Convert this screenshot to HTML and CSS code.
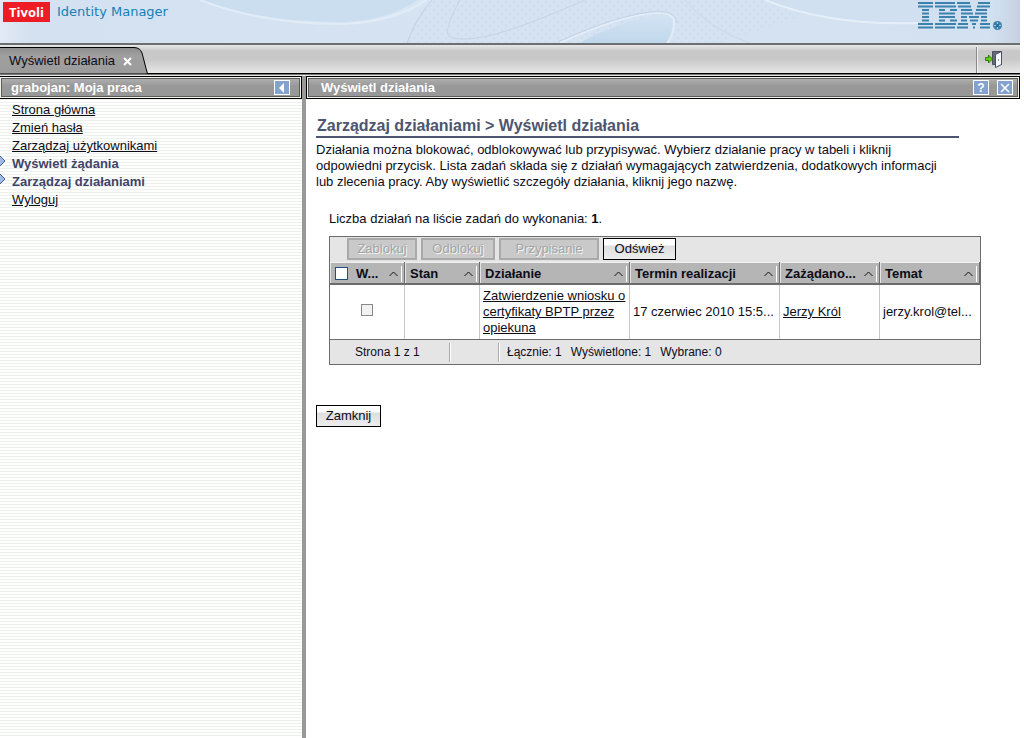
FILE: index.html
```html
<!DOCTYPE html>
<html lang="pl">
<head>
<meta charset="utf-8">
<title>Tivoli Identity Manager</title>
<link rel="stylesheet" href="styles.css">
</head>
<body>
<div class="app">
  <header class="banner">
    <svg class="banner-art" viewBox="0 0 1020 43" preserveAspectRatio="none" aria-hidden="true">
      <defs>
        <linearGradient id="sky" x1="0" x2="1" y1="0" y2="0">
          <stop offset="0" stop-color="#e2eaf4"/><stop offset=".03" stop-color="#d4e1f0"/>
          <stop offset=".5" stop-color="#d6e3f2"/><stop offset=".97" stop-color="#d3e1f0"/><stop offset="1" stop-color="#c6d2e2"/>
        </linearGradient>
        <pattern id="dots" width="8" height="8" patternUnits="userSpaceOnUse">
          <circle cx="2" cy="2" r="1.5" fill="#cbdbec"/><circle cx="6" cy="6" r="1.5" fill="#cbdbec"/>
        </pattern>
        <linearGradient id="pool" x1="0" x2="0" y1="0" y2="1">
          <stop offset="0" stop-color="#d2e2f2"/><stop offset="1" stop-color="#c0d8ec"/>
        </linearGradient>
      </defs>
      <rect width="1020" height="43" fill="url(#sky)"/>
      <path d="M426 0H850L720 43H408z" fill="url(#dots)" opacity=".6"/>
      <path d="M200 0Q265 26 350 24Q400 22 432 0z" fill="#d8e6f4"/>
      <path d="M200 0Q265 23 345 22Q388 20 418 0z" fill="#cbdef0"/>
      <path d="M200 0Q265 25 345 24Q396 21 426 0" fill="none" stroke="#e2ecf6" stroke-width="2"/>
      <path d="M432 0Q415 20 407 43" fill="none" stroke="#c2cfdf"/>
      <path d="M460 0Q442 32 450 37C475 46 530 24 585 0" fill="none" stroke="#c6d3e1"/>
      <path d="M580 43C620 20 676 8 674 23Q673 37 667 43z" fill="url(#pool)"/>
      <path d="M560 43C625 13 677 4 674 23Q673 37 667 43" fill="none" stroke="#e3edf7" stroke-width="2"/>
      <path d="M558 42C625 11 678 2 676 23" fill="none" stroke="#c3d2e2"/>
      <path d="M765 0Q830 26 918 23L1000 16V0z" fill="#cedff0" opacity=".7"/>
      <path d="M765 0Q830 26 918 23" fill="none" stroke="#e6eff8" stroke-width="2"/>
      <path d="M685 0Q710 30 750 43" fill="none" stroke="#cbd8e6"/>
    </svg>
    <div class="brand"><span class="brand-tag">Tivoli</span><span class="brand-name">Identity Manager</span></div>
    <svg class="ibm" width="86" height="30" viewBox="0 0 86 30" role="img" aria-label="IBM">
      <g fill="none" stroke="#3c82ae" stroke-width="2">
        <path d="M0 3H15M17 3H37M39 3H52M60 3H72"/>
        <path d="M0 6.500H15M17 6.500H38M40 6.500H53M59 6.500H72"/>
        <path d="M4 10H11M21 10H27M32 10H39M43 10H54M58 10H69"/>
        <path d="M4 13.500H11M21 13.500H37M43 13.500H55M57 13.500H69"/>
        <path d="M4 17H11M21 17H37M43 17H49M51 17H61M63 17H69"/>
        <path d="M4 20.500H11M21 20.500H27M32 20.500H39M43 20.500H49M52 20.500H60M63 20.500H69"/>
        <path d="M0 24H15M17 24H38M40 24H50M54 24H58M62 24H72"/>
        <path d="M0 27.500H15M17 27.500H37M39 27.500H50M55 27.500H57M62 27.500H72"/>
      </g>
      <circle cx="79.500" cy="25.500" r="4.500" fill="#3c82ae"/>
      <path d="M76 25.500h7M79.500 22v7" stroke="#a9c9df"/>
      <circle cx="79.500" cy="25.500" r="1.500" fill="#1f6796"/>
    </svg>
  </header>

  <nav class="tabbar">
    <div class="tab">
      <svg class="tab-shape" width="149" height="27" viewBox="0 0 149 27" aria-hidden="true">
        <defs><linearGradient id="tabfill" x1="0" x2="0" y1="0" y2="1"><stop offset="0" stop-color="#8c8c8c"/><stop offset=".3" stop-color="#a0a0a0"/><stop offset="1" stop-color="#9b9b9b"/></linearGradient></defs>
        <path d="M-2 .5H134Q140 .5 142 6L147.500 27H-2z" fill="url(#tabfill)" stroke="#000"/>
      </svg>
      <span class="tab-label">Wyświetl działania</span>
      <button class="tab-close" aria-label="Zamknij kartę">
        <svg width="9" height="9" viewBox="0 0 9 9"><path d="M1 1l7 7M8 1l-7 7" stroke="#fff" stroke-width="2"/></svg>
      </button>
    </div>
    <button class="logout" aria-label="Wyloguj">
      <svg width="18" height="18" viewBox="0 0 18 18">
        <path d="M7.500 1.500h9v13h-9z" fill="#666a78" stroke="#4a4e5e"/>
        <path d="M10.500 4.500l6-3v13l-6 3z" fill="#f4f7fc" stroke="#4a5068"/>
        <path d="M13 9.500h1v1h-1z" fill="#333"/>
        <path d="M.5 7.500h3v-2.500l4 4-4 4v-2.500h-3z" fill="#5fd016" stroke="#2c7d08"/>
      </svg>
    </button>
  </nav>

  <div class="columns">
    <aside class="side">
      <div class="titlebar titlebar-side">
        <h2 class="titlebar-text">grabojan: Moja praca</h2>
        <button class="tool" aria-label="Zwiń panel"><svg width="12" height="12" viewBox="0 0 12 12"><path d="M8 1v10L3 6z" fill="#fff"/></svg></button>
      </div>
      <ul class="menu">
        <li><a href="#">Strona główna</a></li>
        <li><a href="#">Zmień hasła</a></li>
        <li><a href="#">Zarządzaj użytkownikami</a></li>
        <li class="group"><svg class="mark" width="6" height="12" viewBox="0 0 6 12"><path d="M-5 6L0 1l5 5-5 5z" fill="#9dbbe3" stroke="#4a5f8e"/></svg><a href="#">Wyświetl żądania</a></li>
        <li class="group"><svg class="mark" width="6" height="12" viewBox="0 0 6 12"><path d="M-5 6L0 1l5 5-5 5z" fill="#9dbbe3" stroke="#4a5f8e"/></svg><a href="#">Zarządzaj działaniami</a></li>
        <li><a href="#">Wyloguj</a></li>
      </ul>
    </aside>

    <main class="main">
      <div class="titlebar">
        <h2 class="titlebar-text">Wyświetl działania</h2>
        <button class="tool" aria-label="Pomoc"><span class="tool-char">?</span></button>
        <button class="tool" aria-label="Zamknij stronę"><svg width="12" height="12" viewBox="0 0 12 12"><path d="M2 2l8 8M10 2l-8 8" stroke="#fff" stroke-width="1.500"/></svg></button>
      </div>
      <div class="content">
        <h1 class="heading">Zarządzaj działaniami &gt; Wyświetl działania</h1>
        <p class="intro">Działania można blokować, odblokowywać lub przypisywać. Wybierz działanie pracy w tabeli i kliknij odpowiedni przycisk. Lista zadań składa się z działań wymagających zatwierdzenia, dodatkowych informacji lub zlecenia pracy. Aby wyświetlić szczegóły działania, kliknij jego nazwę.</p>
        <p class="count">Liczba działań na liście zadań do wykonania: <b>1</b>.</p>
        <section class="grid">
          <div class="toolbar">
            <button class="btn btn-lock" disabled>Zablokuj</button>
            <button class="btn btn-unlock" disabled>Odblokuj</button>
            <button class="btn btn-assign" disabled>Przypisanie</button>
            <button class="btn btn-refresh">Odśwież</button>
          </div>
          <table class="table">
            <colgroup><col class="c-narrow"><col class="c-narrow"><col class="c-wide"><col class="c-wide"><col class="c-mid"><col class="c-mid"></colgroup>
            <thead>
              <tr>
                <th><div class="th"><input class="check check-all" type="checkbox" aria-label="Wybierz wszystko"><span>W...</span><svg class="sort" width="9" height="6" viewBox="0 0 9 6"><path d="M.5 5l4-4 4 4" fill="none" stroke="#111"/></svg></div></th>
                <th><div class="th"><span>Stan</span><svg class="sort" width="9" height="6" viewBox="0 0 9 6"><path d="M.5 5l4-4 4 4" fill="none" stroke="#111"/></svg></div></th>
                <th><div class="th"><span>Działanie</span><svg class="sort" width="9" height="6" viewBox="0 0 9 6"><path d="M.5 5l4-4 4 4" fill="none" stroke="#111"/></svg></div></th>
                <th><div class="th"><span>Termin realizacji</span><svg class="sort" width="9" height="6" viewBox="0 0 9 6"><path d="M.5 5l4-4 4 4" fill="none" stroke="#111"/></svg></div></th>
                <th><div class="th"><span>Zażądano...</span><svg class="sort" width="9" height="6" viewBox="0 0 9 6"><path d="M.5 5l4-4 4 4" fill="none" stroke="#111"/></svg></div></th>
                <th><div class="th"><span>Temat</span><svg class="sort" width="9" height="6" viewBox="0 0 9 6"><path d="M.5 5l4-4 4 4" fill="none" stroke="#111"/></svg></div></th>
              </tr>
            </thead>
            <tbody>
              <tr>
                <td class="pick"><input class="check" type="checkbox" aria-label="Wybierz wiersz"></td>
                <td></td>
                <td><a href="#">Zatwierdzenie wniosku o certyfikaty BPTP przez opiekuna</a></td>
                <td class="one-line">17 czerwiec 2010 15:5...</td>
                <td><a href="#">Jerzy Król</a></td>
                <td class="one-line">jerzy.krol@tel...</td>
              </tr>
            </tbody>
          </table>
          <footer class="status">
            <span class="page">Strona 1 z 1</span>
            <span class="pager"></span>
            <span class="totals"><span>Łącznie: 1</span><span>Wyświetlone: 1</span><span>Wybrane: 0</span></span>
          </footer>
        </section>
        <button class="btn btn-close">Zamknij</button>
      </div>
    </main>
  </div>
</div>
</body>
</html>
```

FILE: styles.css
```css
* { box-sizing: border-box; }

body {
  margin: 0;
  background: #fff;
  color: #0c0c18;
  font: 13px/16px "Liberation Sans", Arial, sans-serif;
}

h1, h2, p, ul { margin: 0; padding: 0; }
button { font: inherit; padding: 0; cursor: pointer; }
a { color: inherit; text-underline-offset: 1px; }
svg { display: block; }

.app {
  display: flex;
  flex-direction: column;
  min-height: 100vh;
  padding-right: 4px;
}

/* Banner */
.banner {
  position: relative;
  display: flex;
  justify-content: space-between;
  align-items: flex-start;
  height: 45px;
  padding: 0 16px 0 3px;
  border-bottom: 2px solid #6b6f6f;
}
.banner-art { position: absolute; inset: 0; width: 100%; height: 100%; }
.brand { position: relative; display: flex; gap: 7px; align-items: center; padding-top: 2px; }
.brand-tag {
  width: 47px;
  background: #ee1c25;
  color: #fff;
  font: bold 13px/20px "Open Sans", sans-serif;
  text-align: center;
}
.brand-name { color: #1480b8; font: 13px/20px "DejaVu Sans", sans-serif; }
.ibm { position: relative; }

/* Tab strip */
.tabbar {
  display: flex;
  justify-content: space-between;
  height: 31px;
  padding-top: 2px;
  background: linear-gradient(#e8e8e8 0, #c8c8c8 6px, #c8c8c8 14px, #e6e6e6 28px, #000 28px, #000 29px, #777 29px, #777 30px, #e8e8e8 30px);
}
.tab { position: relative; display: flex; align-items: center; gap: 8px; height: 27px; padding: 1px 0 0 9px; }
.tab-shape { position: absolute; left: 0; top: 0; }
.tab-label { position: relative; }
.tab-close { position: relative; border: 0; background: none; }
.logout {
  height: 26px;
  padding: 0 17px 2px 8px;
  border: 0;
  border-left: 1px solid #888;
  background: none;
  box-shadow: inset 1px 0 #f4f4f4;
}

/* Columns */
.columns { display: flex; flex: 1; }
.side {
  flex: 0 0 306px;
  border-right: 4px solid #999;
  background: repeating-linear-gradient(#fff 0, #fff 2px, #edf1ec 2px, #edf1ec 3px);
}
.main { flex: 1; min-width: 0; }

.titlebar {
  display: flex;
  align-items: center;
  gap: 8px;
  height: 23px;
  padding: 0 6px 0 14px;
  border: 1px solid #000;
  background: linear-gradient(#b4b4b4, #989898 9px, #989898);
  box-shadow: inset 0 0 0 1px #f2f2e8, inset 0 0 0 2px #5c5c5c;
}
.titlebar-side { border-left: 0; padding: 0 11px; }
.titlebar-text { flex: 1; color: #fff; font-size: 13px; line-height: 17px; }
.tool {
  display: flex;
  align-items: center;
  justify-content: center;
  width: 16px;
  height: 15px;
  border: 1px solid #fff;
  background: #84a2ce;
}
.tool-char { color: #fff; font-weight: bold; font-size: 12px; line-height: 12px; }

/* Menu */
.menu { list-style: none; padding-top: 2px; }
.menu li { position: relative; padding-left: 12px; line-height: 18px; }
.group { color: #404468; font-weight: bold; }
.group a { text-decoration: none; }
.mark { position: absolute; left: 0; top: 0; }

/* Content */
.content { padding: 17px 39px 17px 10px; }
.heading {
  margin-right: 22px;
  padding: 0 1px 1px;
  border-bottom: 2px solid #4d5570;
  color: #4d5570;
  font-size: 16px;
  line-height: 19px;
}
.intro { margin: 4px 32px 0 0; }
.count { margin: 21px 0 9px 13px; }
.grid { margin-left: 13px; border: 1px solid #6c6c6c; background: #e5e5e5; }
.toolbar { display: flex; gap: 4px; padding: 1px 0 2px 17px; }

.btn {
  height: 22px;
  border: 1px solid #000;
  background: linear-gradient(#fff 0, #fff 6px, #dedede 7px, #ededed);
  color: #0c0c18;
  font-size: 13px;
  line-height: 16px;
}
.btn:disabled { border: 2px solid #a9a9a9; background: #c9c9c9; color: #a4a4a4; text-shadow: 1px 1px #f4f4f4; }
.btn-lock { width: 70px; }
.btn-unlock { width: 74px; }
.btn-assign { width: 100px; }
.btn-refresh { width: 73px; }
.btn-close { width: 65px; margin-top: 40px; }

.table { width: 100%; border-collapse: separate; border-spacing: 0; table-layout: fixed; }
.c-narrow { width: 75px; }
.c-wide { width: 150px; }
.c-mid { width: 100px; }
.table th { padding: 0; background: #b5b5b5; border-bottom: 2px solid #6c6c6c; border-right: 1px solid #6c6c6c; text-align: left; }
.th {
  display: flex;
  align-items: center;
  height: 21px;
  padding: 1px 6px 0 4px;
  border-top: 1px solid #f0f0f0;
  border-left: 1px solid #e4e4e4;
  background: linear-gradient(#fff, #fff) right 2px top 3px / 1px 16px no-repeat;
  font-size: 13px;
}
.sort { margin-left: auto; }
.table td { height: 54px; padding: 2px 3px; border-right: 1px solid #c8c8c8; background: #fff; vertical-align: middle; }
.table td:last-child { border-right: 0; }
.table .one-line { white-space: nowrap; }
.table .pick { text-align: center; }
.check { appearance: none; width: 12px; height: 12px; margin: 0; border: 1px solid #888; background: #f2f2f2; }
.check-all { width: 13px; height: 13px; margin-right: 8px; border-color: #1f4f80; background: #fff; }

.status { display: flex; height: 25px; padding: 3px 0 2px; border-top: 1px solid #6c6c6c; font-size: 12px; line-height: 19px; }
.page { width: 120px; padding-left: 25px; border-right: 1px solid #aaa; box-shadow: 1px 0 #fff; }
.pager { width: 49px; border-right: 1px solid #aaa; box-shadow: 1px 0 #fff; }
.totals { display: flex; gap: 9px; padding-left: 8px; }
```
